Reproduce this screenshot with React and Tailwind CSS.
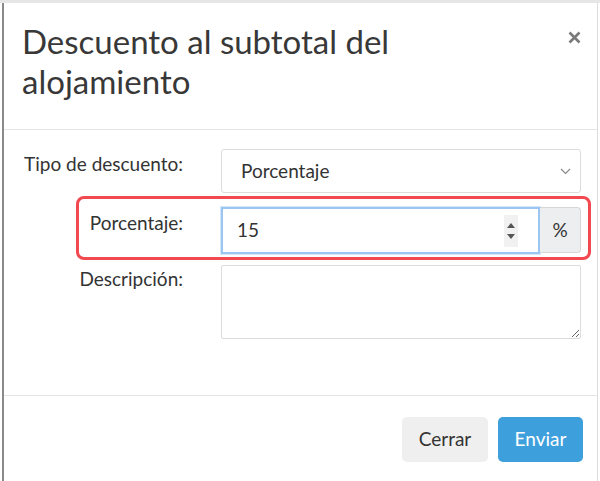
import React from "react";

export default function App() {
  const font = { fontFamily: "Lato, 'Open Sans', sans-serif" };
  return (
    <div className="w-[600px] h-[481px] bg-white overflow-hidden flex flex-col text-[#333]" style={font}>
      <div className="h-[3px] bg-[#e6e6e6] shrink-0" />
      <div className="ml-[2px] w-[596px] flex-1 border-l-2 border-l-[#8a8a8a] border-r border-r-[#dcdcdc] flex flex-col">
        {/* Header */}
        <div className="relative h-[127px] border-b border-[#e5e5e5] pl-[18px] pt-[18px]">
          <h1 className="text-[33px] leading-[40px] font-normal text-[#383838] w-[420px]">
            Descuento al subtotal del alojamiento
          </h1>
          <button className="absolute right-[16px] top-[27px] w-[14px] h-[14px] flex items-center justify-center">
            <svg width="13" height="13" viewBox="0 0 13 13">
              <path d="M1.5 1.5 L11.5 11.5 M11.5 1.5 L1.5 11.5" stroke="#7a7a7a" strokeWidth="2.6" strokeLinecap="butt" />
            </svg>
          </button>
        </div>
        {/* Body */}
        <div className="h-[266px] border-b border-[#e5e5e5] pt-[19px] flex flex-col">
          {/* Row 1 */}
          <div className="flex h-[44px]">
            <label className="w-[179px] text-right text-[19px] leading-[25px] pt-[2px]">Tipo de descuento:</label>
            <div className="ml-[38px] w-[360px] h-[44px] border border-[#dcdcdc] rounded-[3px] flex items-center justify-between pl-[19px] pr-[9px]">
              <span className="text-[19px]">Porcentaje</span>
              <svg width="11" height="7" viewBox="0 0 11 7">
                <path d="M1 1 L5.5 5.5 L10 1" fill="none" stroke="#888" strokeWidth="1.2" />
              </svg>
            </div>
          </div>
          {/* Row 2 */}
          <div className="relative flex h-[47px] mt-[14px]">
            <div className="absolute left-[72px] top-[-11px] w-[515px] h-[64px] border-[3px] border-[#f2484f] rounded-[8px] pointer-events-none" />
            <label className="w-[179px] text-right text-[19px] leading-[25px] pt-[3px]">Porcentaje:</label>
            <div className="ml-[38px] flex h-[47px]">
              <div className="w-[319px] h-[47px] border-2 border-[#9cc6f2] shadow-[0_0_0_1px_#d3e6fa] flex items-center justify-between pl-[14px] pr-[20px]">
                <span className="text-[19px]">15</span>
                <div className="w-[14px] h-[32px] bg-[#f1f1f1] flex flex-col items-center justify-center gap-[6px]">
                  <svg width="8" height="5" viewBox="0 0 8 5"><path d="M0 5 L4 0 L8 5 Z" fill="#555" /></svg>
                  <svg width="8" height="5" viewBox="0 0 8 5"><path d="M0 0 L4 5 L8 0 Z" fill="#555" /></svg>
                </div>
              </div>
              <div className="w-[41px] h-[46px] bg-[#eceeef] border border-l-0 border-[#d6d6d6] rounded-r-[4px] flex items-center justify-center text-[19px]">
                %
              </div>
            </div>
          </div>
          {/* Row 3 */}
          <div className="flex h-[74px] mt-[11px]">
            <label className="w-[179px] text-right text-[19px] leading-[25px] pt-[1px]">Descripción:</label>
            <textarea className="ml-[38px] w-[360px] h-[74px] border border-[#dcdcdc] rounded-[2px] outline-none" />
          </div>
        </div>
        {/* Footer */}
        <div className="flex justify-end gap-[10px] pt-[21px] pr-[14px]">
          <button className="w-[86px] h-[45px] bg-[#efefef] rounded-[5px] text-[19px] text-[#333]">Cerrar</button>
          <button className="w-[85px] h-[45px] bg-[#3d9fdc] rounded-[5px] text-[19px] text-white">Enviar</button>
        </div>
      </div>
    </div>
  );
}
